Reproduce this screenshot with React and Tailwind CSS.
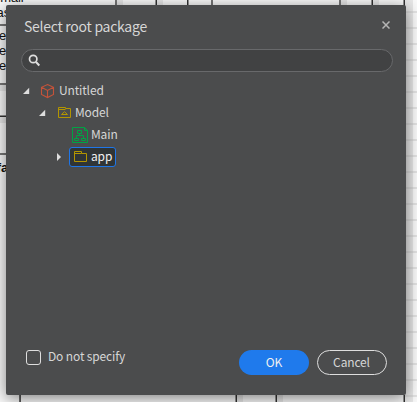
import React from "react";

const Arrow = ({ open }) => (
  <svg className="block h-[10px] w-[10px] shrink-0" viewBox="0 0 10 10" fill="#dedede">
    {open ? <path d="M7.2 1.8V8H1Z" /> : <path d="M3 1L7 5L3 9Z" />}
  </svg>
);

const CubeIcon = () => (
  <svg className="block h-4 w-4" viewBox="0 0 16 16" fill="none" stroke="#c4533a" strokeWidth="1.1">
    <path d="M8.5 1.5L14.5 4.3V11.5L8.5 14.6L2.5 11.5V4.3ZM2.5 4.3L8.5 7.4L14.5 4.3M8.5 7.4V14.6" />
  </svg>
);

const ModelIcon = () => (
  <svg className="block h-4 w-4" viewBox="0 0 16 16" fill="none" stroke="#b39500" strokeWidth="1">
    <path d="M2.5 12.5V2.5H9.5V3.5H14.5V12.5ZM2.5 4.5H9.5M5.5 9.5L8.5 6.7L11.5 9.5Z" />
  </svg>
);

const DiagramIcon = () => (
  <svg className="block h-4 w-4" viewBox="0 0 16 16" fill="none" stroke="#00a344" strokeWidth="1">
    <path d="M.5.5H12.5L15.5 3.5V15.5H.5ZM12.5.5V3.5H15.5" />
    <path d="M5.5 3.5H9.5V6.5H5.5ZM7.5 6.5V8.5M4.5 11V8.5H11.5V11M2.5 11.5H6.5V13.5H2.5ZM9.5 11.5H13.5V13.5H9.5Z" />
  </svg>
);

const FolderIcon = () => (
  <svg className="block h-4 w-4" viewBox="0 0 16 16" fill="none" stroke="#b39500" strokeWidth="1">
    <path d="M2.5 12.5V2.5H9.5V4.5H14.5V12.5ZM2.5 4.5H9.5" />
  </svg>
);

const Canvas = () => (
  <svg className="absolute inset-0 h-[402px] w-[417px]" viewBox="0 0 417 402">
    <rect width="417" height="402" fill="#fafafa" />
    <g fill="#e8e8e8">
      <rect x="117" width="6" height="6" />
      <rect x="157" width="6" height="6" />
      <rect x="341" width="6" height="6" />
      <rect x="373" width="6" height="6" />
      <rect x="405" width="8" height="402" />
      <rect y="85" width="6" height="6" />
      <rect y="117" width="6" height="6" />
      <rect x="237" y="395" width="6" height="7" />
      <rect x="277" y="395" width="6" height="7" />
    </g>
    {Array.from({ length: 25 }, (_, i) => (
      <g key={i}>
        <rect x="405" y={11 + i * 16} width="8" height="2" fill="#dadada" />
        <rect x="413" y={11 + i * 16} width="4" height="2" fill="#e4e4e4" />
      </g>
    ))}
    <g fill="#777">
      <rect x="115" width="2" height="6" />
      <rect x="211" width="2" height="6" />
      <rect x="339" width="2" height="6" />
      <rect y="24" width="6" height="2" />
      <rect y="83" width="6" height="2" />
      <rect y="153" width="6" height="2" />
    </g>
    <g fill="#333">
      <rect x="155.5" width="1.5" height="6" />
      <rect x="187" width="1.5" height="6" />
      <rect x="371.5" width="1.5" height="6" />
      <rect x="403.5" width="1.5" height="6" />
      <rect y="115.5" width="6" height="1.5" />
      <rect x="19.3" y="395" width="1.5" height="7" />
      <rect x="235.5" y="395" width="1.5" height="7" />
      <rect x="275.5" y="395" width="1.5" height="7" />
      <rect x="403.5" y="395" width="1.5" height="7" />
    </g>
    <g fill="#111" fontFamily="Liberation Sans, sans-serif" fontSize="13" textAnchor="end">
      <text x="23.5" y="2">email</text>
      <text x="10" y="17">as</text>
      <text x="6" y="40">e</text>
      <text x="6" y="55">e</text>
      <text x="6" y="70">e</text>
      <text x="8" y="172" fontWeight="bold">fa</text>
    </g>
  </svg>
);

export default function App() {
  return (
    <div className="relative h-[402px] w-[417px] overflow-hidden pt-[5px] pl-[6px] font-['Noto_Sans_CJK_SC',sans-serif] text-[12px] leading-[22px] tracking-[-0.14px] text-[#d6d6d6]">
      <Canvas />
      <section className="relative flex h-[390px] w-[400px] flex-col rounded-[2px] bg-[#4b4c4d] shadow-[0_3px_16px_rgba(0,0,0,0.5)]">
        <header className="flex h-[44px] items-start justify-between pt-[10px] pr-[16px] pl-[18px]">
          <h1 className="text-[14px] leading-[22px] tracking-[-0.27px]">Select root package</h1>
          <svg className="mt-[6px] h-[8px] w-[8px]" viewBox="0 0 8 8" stroke="#b5b5b5" strokeWidth="1.5">
            <path d="M.5.5L7.5 7.5M7.5.5L.5 7.5" />
          </svg>
        </header>
        <div className="mr-[13px] ml-[15px] flex h-[23px] shrink-0 items-center rounded-full border border-[#68696b] bg-[#414243] pl-[6px]">
          <svg className="h-[13px] w-[13px]" viewBox="0 0 13 13" fill="none" stroke="#dedede">
            <circle cx="5.2" cy="5" r="3.7" strokeWidth="1.7" />
            <path d="M8 8L11.3 11.5" strokeWidth="2" />
          </svg>
        </div>
        <div className="flex flex-col pt-[8px]">
          <div className="flex h-[22px] items-center pl-[16px]">
            <Arrow open />
            <span className="ml-[7px]"><CubeIcon /></span>
            <span className="ml-[4px] pb-[2px]">Untitled</span>
          </div>
          <div className="flex h-[22px] items-center pl-[32px]">
            <Arrow open />
            <span className="ml-[8px]"><ModelIcon /></span>
            <span className="ml-[3px] pb-[2px]">Model</span>
          </div>
          <div className="flex h-[22px] items-center pl-[66px]">
            <DiagramIcon />
            <span className="ml-[3px] pb-[2px]">Main</span>
          </div>
          <div className="flex h-[22px] items-center pl-[48px]">
            <Arrow />
            <div className="ml-[5px] flex h-[20px] w-[47px] items-center rounded-[3px] border border-[#1f76e8] bg-[#303536] pl-[2px] text-[#f0f0f0]">
              <FolderIcon />
              <span className="ml-[3px] pb-[2px]">app</span>
            </div>
          </div>
        </div>
        <footer className="mt-auto flex items-start pr-[19px] pb-[20px] pl-[20px]">
          <span className="h-[15px] w-[15px] rounded-[3px] border border-[#dedede]" />
          <span className="-mt-[5px] ml-[7px] whitespace-nowrap">Do not specify</span>
          <button className="ml-auto h-[25px] w-[70px] rounded-full bg-[#1f7aec] pb-[2px] text-center leading-[23px] text-[#f0f0f0]">OK</button>
          <button className="ml-[8px] h-[25px] w-[70px] rounded-full border border-[#dedede] pr-[1px] pb-[2px] text-center leading-[21px]">Cancel</button>
        </footer>
      </section>
    </div>
  );
}
